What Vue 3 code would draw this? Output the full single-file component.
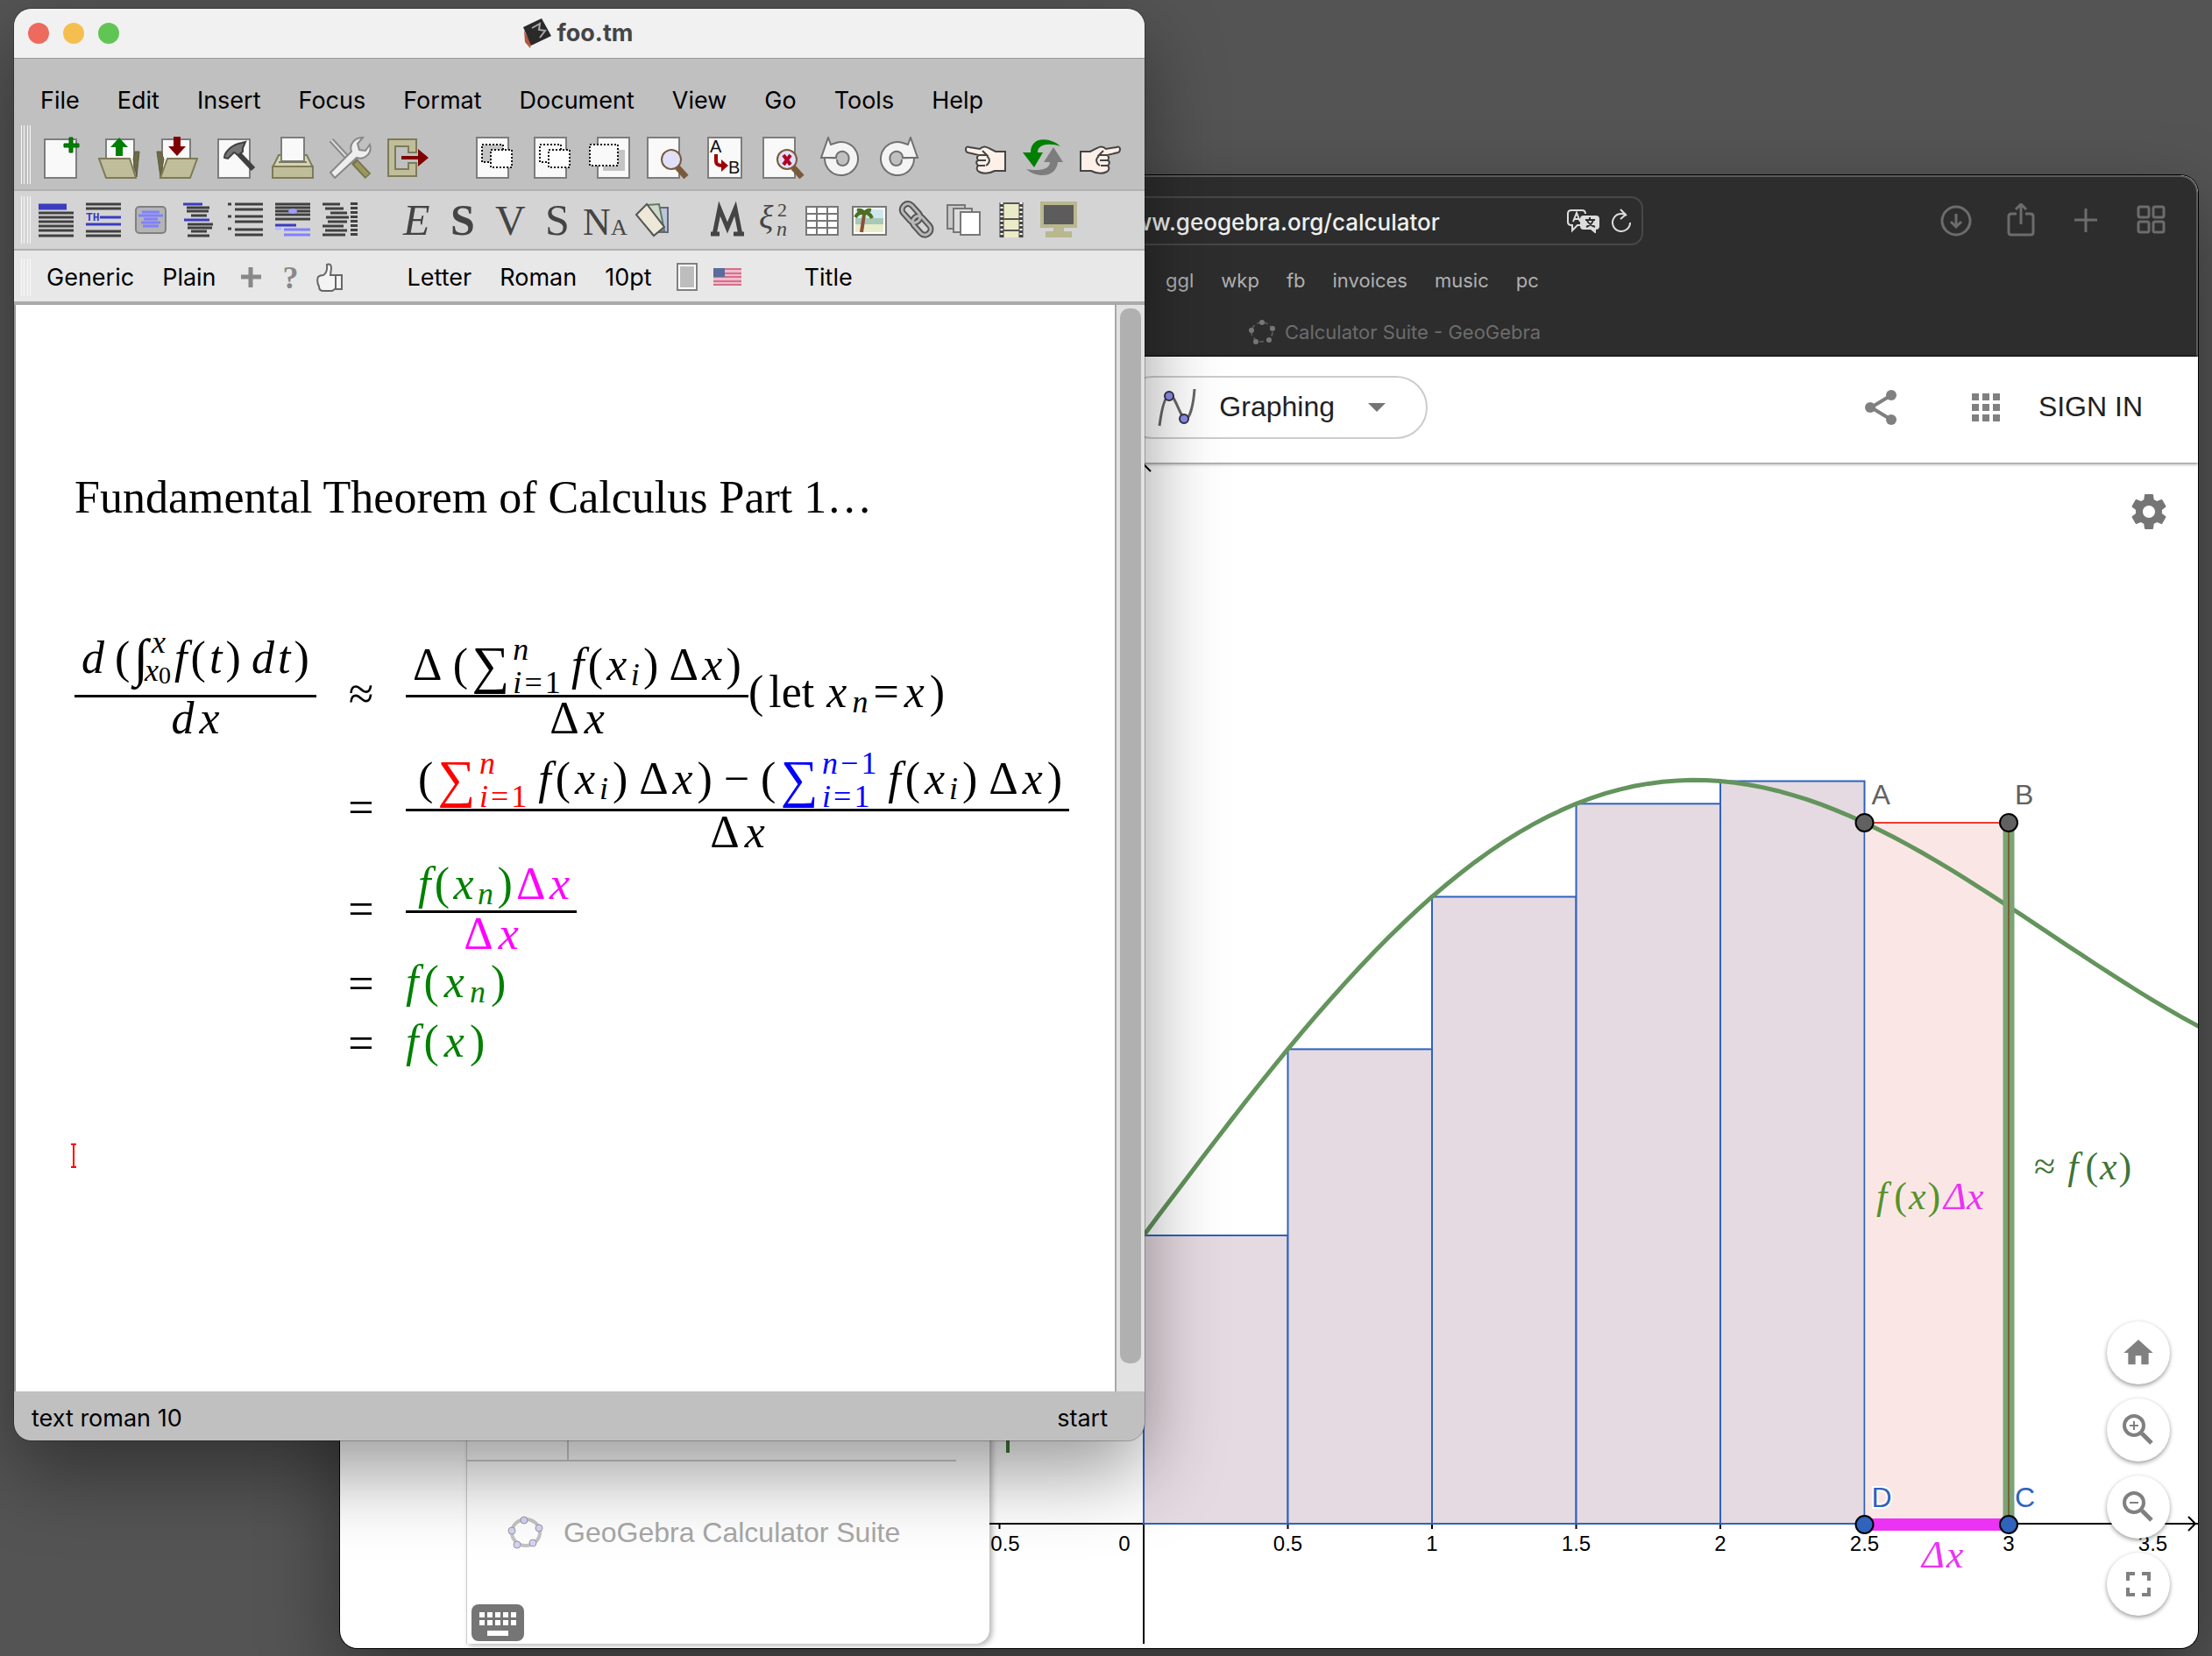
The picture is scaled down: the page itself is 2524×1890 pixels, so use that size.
<script setup>
const page = (x, w, y = 1, h = 46) =>
  `<rect x="${x}" y="${y}" width="${w}" height="${h}" fill="#f9f9f9" stroke="#7d7d7d" stroke-width="2"/>`
const rows = (list, color = '#404040', weight = 3) =>
  list.map(([x1, x2, y, c]) => `<path d="M${x1} ${y}H${x2}" stroke="${c || color}" stroke-width="${weight}"/>`).join('')

const blue = '#3c3cc0'
const sky = '#8080ff'

const lens = (x, extra = '') =>
  page(x, 36) +
  `<path d="M35 35l10 11" stroke="#7a5a3c" stroke-width="7"/><circle cx="28" cy="26" r="11" fill="#e0e0fa" stroke="#7a5a3c" stroke-width="2"/>` +
  extra

const spiral =
  '<path d="M5 25A19 19 0 1 0 18 7L12 9 9 1 1 24h17c0-6 6-9 11-6 6 4 4 14-3 15-5 0-7-3-7-7" fill="#f4f4f4" stroke="#707070" stroke-width="2"/>'
const hand =
  '<path d="M2 14c0-2 2-3 4-2l12 2c3-3 7-3 10-1l8 4h11v22H35c-6 3-12 4-18 1-3-2-3-5-1-7-3-3-2-5 0-6-2-3-1-5 1-6L4 18c-1 0-2-2-2-4z" fill="#fdf0e8" stroke="#444" stroke-width="2"/><path d="M17 21h9l-5-5M16 27h9M16 33h8M26 22c4 3 4 8-1 11" fill="none" stroke="#444" stroke-width="2"/>'

const mainTools = [
  [
    { label: 'New', art: page(5, 36, 3, 44) + '<path d="M33 1h4v7h7v4h-7v6h-4v-6h-6V8h6z" fill="#008000" stroke="#006000"/>' },
    {
      label: 'Open',
      art: page(9, 32, 3, 40) + '<path d="M42 17l5 0-3 29-4-20z" fill="#6d6a48" stroke="#5d5a3c"/><path d="M1 25h35l7 22H9z" fill="#c0be9a" stroke="#7d7b58" stroke-width="2"/><path d="M24 1l10 11h-6v10h-8V12h-6z" fill="#008000"/>'
    },
    {
      label: 'Save',
      art: page(7, 32, 3, 40) + '<path d="M1 17h5l3 9-4 20z" fill="#6d6a48" stroke="#5d5a3c"/><path d="M13 25h34l-8 22H5z" fill="#c0be9a" stroke="#7d7b58" stroke-width="2"/><path d="M24 22l10-11h-6V0h-8v11h-6z" fill="#800000"/>'
    },
    {
      label: 'Build',
      art: page(5, 36, 3, 44) + '<path d="M26 17l19 20" stroke="#404040" stroke-width="6"/><path d="M12 24c0-6 8-15 20-17l4-1-3 7 0 4-5 4-5-3-7 7z" fill="#757575" stroke="#404040" stroke-width="2"/>'
    },
    {
      label: 'Print',
      art: '<path d="M8 21h32l7 14H1z" fill="#d6d4b4" stroke="#7d7b58" stroke-width="2"/><rect x="11" y="1" width="26" height="27" fill="#f9f9f9" stroke="#7d7d7d" stroke-width="2"/><path d="M8 29h32" stroke="#7d7b58" stroke-width="2"/><rect x="1" y="34" width="46" height="13" fill="#c0be9a" stroke="#7d7b58" stroke-width="2"/>'
    },
    {
      label: 'Preferences',
      art: '<path d="M2 4l23 25" stroke="#888" stroke-width="6"/><path d="M2 4l23 25" stroke="#ddd" stroke-width="2"/><path d="M28 28l16 17" stroke="#77754a" stroke-width="9"/><path d="M30 30l13 14" stroke="#9a985f" stroke-width="5"/><path d="M1 41L25 17C22 8 29 1 38 1l-6 7 2 7 7 1 5-7c3 10-6 18-15 15L6 47z" fill="#eee" stroke="#888" stroke-width="2"/>'
    },
    {
      label: 'Exit',
      art: '<path d="M1 3h32v15h-9v-7H9v26h15v-7h9v15H1z" fill="#c0be9a" stroke="#7d7b58" stroke-width="2"/><path d="M16 22h19v-8l12 10-12 10v-8H16z" fill="#800000"/>'
    }
  ],
  [
    {
      label: 'Copy',
      art: page(4, 36) + '<rect x="10" y="9" width="24" height="20" fill="#c4c4c4" stroke="#111" stroke-width="2" stroke-dasharray="2 2"/><rect x="20" y="15" width="24" height="20" fill="#fff" stroke="#111" stroke-width="2" stroke-dasharray="2 2"/>'
    },
    {
      label: 'Cut',
      art: page(4, 36) + '<rect x="10" y="9" width="24" height="20" fill="#f9f9f9" stroke="#111" stroke-width="2" stroke-dasharray="2 2"/><rect x="20" y="15" width="24" height="20" fill="#fff" stroke="#111" stroke-width="2" stroke-dasharray="2 2"/>'
    },
    {
      label: 'Paste',
      art: page(10, 36) + '<path d="M16 15h25v24H16z" fill="#c4c4c4"/><rect x="1" y="9" width="32" height="24" fill="#f9f9f9" stroke="#111" stroke-width="2" stroke-dasharray="2 2"/>'
    },
    { label: 'Find', art: lens(1) },
    {
      label: 'Replace',
      art: page(4, 38) + '<text x="6" y="18" font-size="20" fill="#111">A</text><text x="27" y="42" font-size="20" fill="#111">B</text><path d="M13 20v8q0 5 7 5" fill="none" stroke="#a00000" stroke-width="4"/><path d="M19 26l8 7-8 7z" fill="#a00000"/>'
    },
    { label: 'Spell check', art: lens(1, '<path d="M24 21l8 11M32 21l-8 11" stroke="#b00020" stroke-width="4"/>') },
    { label: 'Undo', art: spiral },
    { label: 'Redo', art: `<g transform="translate(46 0) scale(-1 1)">${spiral}</g>` }
  ],
  [
    { label: 'Back', art: hand },
    {
      label: 'Reload',
      art: '<path d="M44 11C34 1 10-2 10 18H1l13 17 10-17h-6C18 8 32 7 44 11z" fill="#008000"/><path d="M5 37c11 10 34 11 36-8h6L36 12 25 29h7c0 10-16 10-27 8z" fill="#7d7d7d"/>'
    },
    { label: 'Forward', art: `<g transform="translate(48 0) scale(-1 1)">${hand}</g>` }
  ]
]

const glyph = (t, x, y, size, extra = '') => `<text x="${x}" y="${y}" font-size="${size}" fill="#444" ${extra}>${t}</text>`

const modeTools = [
  [
    {
      label: 'Section',
      art: `<path d="M0 5h32" stroke="${blue}" stroke-width="7"/>` + rows([12, 17, 22, 27, 32, 38].map((y) => [0, 40, y]))
    },
    {
      label: 'Theorem',
      art: rows([[0, 40, 2], [0, 40, 7], [16, 40, 17, blue], [0, 40, 25, blue], [0, 40, 33], [0, 40, 38]]) +
        `<text x="0" y="21" font-size="13" font-weight="700" fill="${blue}" font-family="Liberation Mono">TH</text>`
    },
    {
      label: 'Box',
      art: '<rect x="3" y="5" width="34" height="30" rx="4" fill="#b4b4b4" stroke="#808080" stroke-width="2"/>' +
        rows([[10, 30, 11], [6, 34, 15], [12, 28, 19], [9, 31, 23], [11, 29, 27]], sky)
    },
    {
      label: 'Verse',
      art: rows([[3, 25, 2, blue], [7, 33, 6], [7, 32, 10], [12, 30, 15], [4, 33, 20, blue], [8, 37, 25], [8, 36, 29], [12, 30, 33], [8, 33, 38]])
    },
    {
      label: 'List',
      art: rows([[0, 4, 2], [8, 40, 2], [8, 40, 8], [0, 4, 16], [8, 40, 16], [8, 40, 22], [0, 4, 30], [8, 40, 31], [8, 40, 37]])
    },
    {
      label: 'Figure',
      art: rows([[0, 40, 2], [0, 40, 6], [0, 40, 10], [0, 40, 14], [0, 40, 19], [0, 24, 26, blue], [0, 7, 30, '#b8b8ff'], [10, 40, 31, sky], [10, 40, 37, sky]]) +
        '<ellipse cx="20" cy="10" rx="5" ry="3" fill="#9c9cff"/>'
    },
    {
      label: 'Marginal',
      art: rows([[0, 20, 2], [3, 24, 7], [9, 28, 12], [4, 30, 17], [6, 28, 22], [0, 24, 27], [3, 28, 32], [0, 26, 37]]) +
        '<path d="M36 0v39" stroke="#404040" stroke-width="8" stroke-dasharray="3 2"/>'
    }
  ],
  [
    { label: 'Emphasis', art: glyph('E', 6, 37, 50, 'font-style="italic"') },
    { label: 'Strong', art: glyph('S', 6, 37, 50, 'font-weight="700"') },
    { label: 'Verbatim', art: glyph('V', 3, 37, 48) },
    { label: 'Sample', art: glyph('S', 6, 37, 50) },
    { label: 'Name', art: glyph('N', -5, 37, 44) + glyph('A', 27, 37, 26) },
    {
      label: 'Cards',
      art: '<path d="M24 6h14v28H20z" fill="#b8c8dc" stroke="#667" stroke-width="2"/><path d="M14 3l14-1 6 30-14 4z" fill="#ccd8c8" stroke="#676" stroke-width="2"/><path d="M2 14L14 2l20 26-12 10z" fill="#eee8d8" stroke="#555" stroke-width="2"/>'
    }
  ],
  [
    { label: 'Math', art: '<path d="M5 37L11 7l9 22 9-22 6 30M1 36h10M27 36h12" fill="none" stroke="#444" stroke-width="5"/>' },
    { label: 'Symbols', art: glyph('ξ', 2, 30, 38, 'font-style="italic"') + glyph('2', 23, 16, 22) + glyph('n', 22, 38, 24, 'font-style="italic"') },
    {
      label: 'Table',
      art: '<rect x="2" y="5" width="36" height="32" fill="#fff"/><path d="M2 5h36v32H2zM2 13h36M2 21h36M2 29h36M14 5v32M26 5v32" fill="none" stroke="#777" stroke-width="2"/>'
    },
    {
      label: 'Image',
      art: '<rect x="1" y="5" width="38" height="32" fill="#fff" stroke="#777" stroke-width="2"/><path d="M4 8h32v10H4z" fill="#cfe8f0"/><path d="M4 18h32v7H4z" fill="#a8c8b8"/><path d="M4 25h32v9H4z" fill="#e8ecc8"/><path d="M11 34l3-20" stroke="#8a5038" stroke-width="4"/><path d="M4 17q3-6 10-5 6-1 9 6M6 9q6-1 8 4 3-5 8-4" fill="none" stroke="#4d7020" stroke-width="4"/>'
    },
    {
      label: 'Link',
      art: '<g fill="none" stroke="#555" stroke-width="7"><rect x="2" y="6" width="24" height="13" rx="6" transform="rotate(48 14 12)"/><rect x="14" y="20" width="24" height="13" rx="6" transform="rotate(48 26 26)"/></g><g fill="none" stroke="#b8b8b8" stroke-width="3"><rect x="2" y="6" width="24" height="13" rx="6" transform="rotate(48 14 12)"/><rect x="14" y="20" width="24" height="13" rx="6" transform="rotate(48 26 26)"/></g>'
    },
    {
      label: 'Pages',
      art: '<g stroke="#777" stroke-width="2"><path d="M1 3h20v27H1z" fill="#c8c8c8"/><path d="M8 7h21v27H8z" fill="#ddd"/><path d="M16 11h22v26H16z" fill="#fff"/></g>'
    },
    {
      label: 'Video',
      art: '<rect x="7" y="0" width="26" height="40" fill="#ecebc8"/><path d="M9 0v40M31 0v40" stroke="#444" stroke-width="5"/><path d="M9 0v40M31 0v40" stroke="#fff" stroke-width="3" stroke-dasharray="2 3"/><path d="M11 1h18M11 19h18M11 32h18" stroke="#555" stroke-width="2"/>'
    },
    {
      label: 'Presentation',
      art: '<rect x="1" y="1" width="38" height="26" fill="#5c5c5c" stroke="#b9b78e" stroke-width="4"/><path d="M14 29h12v4h9v7H5v-7h9z" fill="#b9b78e"/>'
    }
  ]
]

const menus = ['File', 'Edit', 'Insert', 'Focus', 'Format', 'Document', 'View', 'Go', 'Tools', 'Help']
const bookmarks = ['ggl', 'wkp', 'fb', 'invoices', 'music', 'pc']

// Graph of f(x) = sin x + 1 + x/3 with left Riemann rectangles
const unit = 329
const origin = { x: 176, y: 1211 }
const f = (x) => Math.sin(x) + 1 + x / 3
const px = (x) => origin.x + unit * x
const py = (y) => origin.y - unit * y
const bars = [0, 0.5, 1, 1.5, 2].map((x) => ({ x: px(x), y: py(f(x)), h: unit * f(x) }))
const curve = Array.from({ length: 90 }, (_, i) => i * 0.05)
  .map((x, i) => `${i ? 'L' : 'M'}${px(x).toFixed(1)} ${py(f(x)).toFixed(1)}`)
  .join('')
const ticks = [-0.5, 0.5, 1, 1.5, 2, 2.5, 3, 3.5]
const topY = py(f(2.5))
</script>

<template>
  <main class="desktop">
    <section class="browser" aria-label="Web browser">
      <header class="chrome">
        <div class="address-row">
          <div class="address">
            <input type="text" value="www.geogebra.org/calculator" aria-label="Address" />
            <span class="address-icons">
              <svg width="40" height="28" viewBox="0 0 40 28">
                <path d="M18 19h-5l-6 6v-6H6q-4 0-4-4V6q0-4 4-4h12q4 0 4 4" fill="none" stroke="#ddd" stroke-width="2" />
                <path d="M20 8h14q4 0 4 4v8q0 4-4 4v5l-6-5h-8q-4 0-4-4v-8q0-4 4-4z" fill="#ddd" />
                <path d="M8 15l4-10 4 10M9 12h6" fill="none" stroke="#ddd" stroke-width="2" />
                <path d="M22 13h11M27 10v3M31 13q-2 6-8 8M24 14q3 5 9 7" fill="none" stroke="#2d2d2d" stroke-width="2" />
              </svg>
              <svg width="26" height="28" viewBox="0 0 26 28">
                <path d="M19 8A10 10 0 1 0 23 16M12 1l6 6-6 5" fill="none" stroke="#ddd" stroke-width="2" />
              </svg>
            </span>
          </div>
          <nav class="chrome-tools">
            <button aria-label="Downloads">
              <svg width="40" height="40" viewBox="0 0 40 40"><circle cx="20" cy="20" r="16" /><path d="M20 12v15M14 21l6 6 6-6" /></svg>
            </button>
            <button aria-label="Share">
              <svg width="40" height="40" viewBox="0 0 40 40"><path d="M15 12H9q-3 0-3 3v18q0 3 3 3h22q3 0 3-3V15q0-3-3-3h-6M20 24V2M14 7l6-6 6 6" /></svg>
            </button>
            <button aria-label="New tab">
              <svg width="40" height="40" viewBox="0 0 40 40"><path d="M20 6v27M7 19h26" /></svg>
            </button>
            <button aria-label="Tab overview">
              <svg width="40" height="40" viewBox="0 0 40 40">
                <rect x="6" y="4" width="12" height="12" rx="2" /><rect x="23" y="4" width="12" height="12" rx="2" />
                <rect x="6" y="21" width="12" height="12" rx="2" /><rect x="23" y="21" width="12" height="12" rx="2" />
              </svg>
            </button>
          </nav>
        </div>
        <nav class="bookmarks">
          <a v-for="b in bookmarks" :key="b" href="#">{{ b }}</a>
        </nav>
        <div class="tab">
          <svg width="32" height="28" viewBox="0 0 32 28">
            <ellipse cx="16" cy="14" rx="12" ry="11" fill="none" stroke="#555" stroke-width="2" stroke-dasharray="5 3" />
            <g fill="#777"><circle cx="16" cy="3" r="3" /><circle cx="28" cy="10" r="3" /><circle cx="24" cy="23" r="3" /><circle cx="9" cy="25" r="3" /><circle cx="4" cy="12" r="3" /></g>
          </svg>
          <span>Calculator Suite - GeoGebra</span>
        </div>
      </header>

      <header class="app-bar">
        <button class="mode">
          <svg width="44" height="44" viewBox="0 0 44 44">
            <path d="M2 43C5 20 9 8 14 8c6 0 12 27 18 27 5 0 9-18 10-34" fill="none" stroke="#666" stroke-width="3" />
            <g fill="#8d8df0" stroke="#334" stroke-width="2"><circle cx="13" cy="9" r="5" /><circle cx="30" cy="35" r="5" /></g>
          </svg>
          <span>Graphing</span>
          <svg width="20" height="10" viewBox="0 0 20 10"><path d="M0 0h20L10 10z" fill="#757575" /></svg>
        </button>
        <div class="app-actions">
          <button aria-label="Share">
            <svg width="40" height="40" viewBox="0 0 40 40">
              <path d="M32 6L9 20l23 14" fill="none" stroke="#808080" stroke-width="4" />
              <g fill="#808080"><circle cx="32" cy="6" r="6" /><circle cx="8" cy="20" r="6" /><circle cx="32" cy="34" r="6" /></g>
            </svg>
          </button>
          <button aria-label="Apps">
            <svg width="32" height="32" viewBox="0 0 32 32"><path d="M4 0v32M16 0v32M28 0v32" stroke="#808080" stroke-width="8" stroke-dasharray="8 4" /></svg>
          </button>
          <a href="#">SIGN IN</a>
        </div>
      </header>

      <div class="workspace">
        <aside class="rail"></aside>
        <section class="algebra">
          <div class="algebra-row"><span></span></div>
          <div class="brand">
            <svg width="42" height="38" viewBox="0 0 42 38">
              <ellipse cx="21" cy="19" rx="16" ry="15" fill="none" stroke="#c4c4c4" stroke-width="4" />
              <g fill="#d4d4fa" stroke="#999"><circle cx="19" cy="5" r="4" /><circle cx="36" cy="14" r="4" /><circle cx="29" cy="31" r="4" /><circle cx="11" cy="33" r="4" /><circle cx="5" cy="17" r="4" /></g>
            </svg>
            <span>GeoGebra Calculator Suite</span>
          </div>
          <button class="keyboard" aria-label="Keyboard">
            <svg width="60" height="42" viewBox="0 0 60 42">
              <path d="M9 12h43M9 21h43" stroke="#fff" stroke-width="6" stroke-dasharray="6 3" />
              <path d="M18 33h24" stroke="#fff" stroke-width="6" />
            </svg>
          </button>
        </section>

        <section class="graph">
          <svg class="plot" role="img" aria-label="Riemann sum under a curve">
            <g stroke="#000" stroke-width="2" fill="none">
              <path :d="`M0 ${origin.y}H5000`" />
              <path :d="`M${origin.x} 0V1348`" />
              <path :d="`M${origin.x - 8} 10l8-8 8 8M1368 ${origin.y - 8}l8 8-8 8`" />
              <path v-for="t in ticks" :key="t" :d="`M${px(t)} ${origin.y}v6`" />
            </g>
            <rect v-for="b in bars" :key="b.x" :x="b.x" :y="b.y" :width="unit / 2" :height="b.h" fill="#e5dae1" stroke="#2f62bd" stroke-width="2" />
            <rect :x="px(2.5) + 1" :y="topY" :width="unit / 2" :height="origin.y - topY" fill="#fae7e5" />
            <path :d="`M${px(2.5)} ${topY}H${px(3)}`" stroke="#f03a2e" stroke-width="2" />
            <path d="M21 1080v50" stroke="#3f7538" stroke-width="4" />
            <path :d="curve" fill="none" stroke="#63945c" stroke-width="5" />
            <path :d="`M${px(3)} ${topY}V${origin.y}`" stroke="#7ba377" stroke-width="13" />
            <path :d="`M${px(3)} ${topY}V${origin.y}`" stroke="#79602f" stroke-width="2" />
            <path :d="`M${px(2.5)} ${origin.y + 1}H${px(3)}`" stroke="#ec32f5" stroke-width="14" />
            <g stroke="#000" stroke-width="2">
              <circle :cx="px(2.5)" :cy="topY" r="10" fill="#616161" /><circle :cx="px(3)" :cy="topY" r="10" fill="#616161" />
              <circle :cx="px(2.5)" :cy="origin.y + 1" r="10" fill="#2f63bc" /><circle :cx="px(3)" :cy="origin.y + 1" r="10" fill="#2f63bc" />
            </g>
            <g class="axis-text">
              <text x="18" :y="origin.y + 31">0.5</text>
              <text v-for="t in ticks.slice(1)" :key="t" :x="px(t)" :y="origin.y + 31">{{ t }}</text>
              <text :x="origin.x - 22" :y="origin.y + 31">0</text>
            </g>
            <g class="point-text">
              <text :x="px(2.5) + 8" :y="topY - 21" fill="#616161">A</text>
              <text :x="px(3) + 7" :y="topY - 21" fill="#616161">B</text>
              <text :x="px(2.5) + 8" :y="origin.y - 19" fill="#2f63bc">D</text>
              <text :x="px(3) + 7" :y="origin.y - 19" fill="#2f63bc">C</text>
            </g>
            <g class="math-text">
              <text x="1012" y="852" fill="#56932b">f<tspan class="up" dx="8">(</tspan><tspan dx="2">x</tspan><tspan class="up" dx="2">)</tspan><tspan dx="4" fill="#ec32f5">Δx</tspan></text>
              <text x="1192" y="818" fill="#3f7538"><tspan class="up">≈</tspan><tspan dx="14">f</tspan><tspan class="up" dx="8">(</tspan><tspan dx="2">x</tspan><tspan class="up" dx="2">)</tspan></text>
              <text x="1064" y="1261" fill="#ec32f5">Δ<tspan dx="2">x</tspan></text>
            </g>
          </svg>
          <button class="settings" aria-label="Settings">
            <svg width="48" height="48" viewBox="0 0 24 24">
              <path fill="#757575" d="M19.43 12.98c.04-.32.07-.64.07-.98s-.03-.66-.07-.98l2.11-1.65c.19-.15.24-.42.12-.64l-2-3.46c-.12-.22-.39-.3-.61-.22l-2.49 1c-.52-.4-1.08-.73-1.69-.98l-.38-2.65C14.46 2.18 14.25 2 14 2h-4c-.25 0-.46.18-.49.42l-.38 2.65c-.61.25-1.17.59-1.69.98l-2.49-1c-.23-.09-.49 0-.61.22l-2 3.46c-.13.22-.07.49.12.64l2.11 1.65c-.04.32-.07.65-.07.98s.03.66.07.98l-2.11 1.65c-.19.15-.24.42-.12.64l2 3.46c.12.22.39.3.61.22l2.49-1c.52.4 1.08.73 1.69.98l.38 2.65c.03.24.24.42.49.42h4c.25 0 .46-.18.49-.42l.38-2.65c.61-.25 1.17-.59 1.69-.98l2.49 1c.23.09.49 0 .61-.22l2-3.46c.12-.22.07-.49-.12-.64l-2.11-1.65zM12 15.5c-1.93 0-3.500-1.570-3.500-3.500s1.570-3.500 3.500-3.500 3.500 1.570 3.500 3.500-1.570 3.500-3.500 3.500z" />
            </svg>
          </button>
          <div class="zoom-stack">
            <button aria-label="Standard view"><svg width="40" height="40" viewBox="0 0 24 24"><path fill="#808080" d="M10 20v-6h4v6h5v-8h3L12 3 2 12h3v8z" /></svg></button>
            <button aria-label="Zoom in">
              <svg width="40" height="40" viewBox="0 0 40 40" fill="none" stroke="#808080"><circle cx="15" cy="15" r="11" stroke-width="4" /><path d="M24 24l11 11" stroke-width="5" /><path d="M10 15h10M15 10v10" stroke-width="2" /></svg>
            </button>
            <button aria-label="Zoom out">
              <svg width="40" height="40" viewBox="0 0 40 40" fill="none" stroke="#808080"><circle cx="15" cy="15" r="11" stroke-width="4" /><path d="M24 24l11 11" stroke-width="5" /><path d="M10 15h10" stroke-width="2" /></svg>
            </button>
            <button aria-label="Full screen"><svg width="40" height="40" viewBox="0 0 40 40"><path d="M8 16V8h8M24 8h8v8M32 24v8h-8M16 32H8v-8" fill="none" stroke="#808080" stroke-width="4" /></svg></button>
          </div>
        </section>
      </div>
    </section>

    <section class="editor" aria-label="Document editor">
      <header class="title-bar">
        <div class="lights">
          <button class="close" aria-label="Close"></button>
          <button class="minimize" aria-label="Minimize"></button>
          <button class="expand" aria-label="Zoom"></button>
        </div>
        <h1>
          <svg width="34" height="34" viewBox="0 0 34 34">
            <path d="M2 14l1 13 6 7 1-5z" fill="#b5553c" />
            <path d="M1 10L22 0l11 20-23 11z" fill="#2a2a2a" />
            <path d="M11 11l9-5-1 7 7 1-6 8" fill="none" stroke="#aaa" stroke-width="2" />
          </svg>
          <span>foo.tm</span>
        </h1>
      </header>

      <nav class="menu-bar">
        <button v-for="m in menus" :key="m">{{ m }}</button>
      </nav>

      <div class="tools main-tools">
        <i class="grip"></i>
        <div v-for="(group, g) in mainTools" :key="g" class="group">
          <button v-for="t in group" :key="t.label" :aria-label="t.label">
            <svg width="48" height="48" viewBox="0 0 48 48" v-html="t.art"></svg>
          </button>
        </div>
      </div>

      <div class="tools mode-tools">
        <i class="grip"></i>
        <div v-for="(group, g) in modeTools" :key="g" class="group">
          <button v-for="t in group" :key="t.label" :aria-label="t.label">
            <svg width="40" height="40" viewBox="0 0 40 40" v-html="t.art"></svg>
          </button>
        </div>
      </div>

      <div class="tools focus-tools">
        <i class="grip"></i>
        <div class="group">
          <button>Generic</button>
          <button>Plain</button>
          <span class="small-icons">
            <button aria-label="Add"><svg width="32" height="34" viewBox="0 0 32 34"><path d="M15 5v23M4 16h23" stroke="#888" stroke-width="5" /></svg></button>
            <button class="help" aria-label="Help">?</button>
            <button aria-label="Like">
              <svg width="32" height="34" viewBox="0 0 32 34"><path d="M2 16q2-2 6-2 5-3 4-12 5-2 5 4l-1 8h13v16h-8l-3 2H8q-5 0-5-5-3-6-1-11zM22 15v14" fill="#f4f4f4" stroke="#666" stroke-width="2" /></svg>
            </button>
          </span>
        </div>
        <div class="group">
          <button>Letter</button>
          <button>Roman</button>
          <button>10pt</button>
          <span class="small-icons tight">
            <button aria-label="Page"><svg width="24" height="34" viewBox="0 0 24 34"><rect x="1" y="1" width="22" height="30" fill="#fff" stroke="#808080" stroke-width="2" /><rect x="4" y="4" width="16" height="24" fill="#bdbdbd" /></svg></button>
            <button aria-label="Language">
              <svg width="32" height="34" viewBox="0 0 32 34"><rect y="6" width="32" height="20" fill="#f0bccb" /><path d="M0 7h32M0 12h32M0 16h32M0 21h32M0 25h32" stroke="#d4708c" stroke-width="2" /><rect y="6" width="13" height="10" fill="#5a6c9c" /></svg>
            </button>
          </span>
        </div>
        <div class="group"><button>Title</button></div>
      </div>

      <div class="doc-area">
        <article class="doc">
          <p class="heading">Fundamental Theorem of Calculus Part 1…</p>

          <div class="equations">
            <div class="frac f1">
              <div class="num high">
                <i>d</i><b class="thin">(</b><span class="big">∫</span><span class="limits int"><i>x</i><span><i>x</i><small>0</small></span></span><i>f</i><b>(</b><i>t</i><b>)</b><i class="thin">d</i><i>t</i><b>)</b>
              </div>
              <div class="den"><i>d</i><i>x</i></div>
            </div>
            <span class="rel">≈</span>
            <div class="rhs">
              <div class="frac f2">
                <div class="num">
                  <b>Δ</b><b class="thin">(</b><span class="big">∑</span><span class="limits"><i>n</i><span><i>i</i><b>=</b><b>1</b></span></span><i class="thin">f</i><b>(</b><i>x</i><i class="sub">i</i><b>)</b><b class="thin">Δ</b><i>x</i><b>)</b>
                </div>
                <div class="den"><b>Δ</b><i>x</i></div>
              </div>
              <span class="inline"><b>(</b><b>let</b><i class="thin">x</i><i class="sub">n</i><b>=</b><i>x</i><b>)</b></span>
            </div>

            <span></span>
            <span class="rel">=</span>
            <div class="rhs">
              <div class="frac f3">
                <div class="num">
                  <b>(</b><span class="big red">∑</span><span class="limits red"><i>n</i><span><i>i</i><b>=</b><b>1</b></span></span><i class="thin">f</i><b>(</b><i>x</i><i class="sub">i</i><b>)</b><b class="thin">Δ</b><i>x</i><b>)</b><b class="thin">−</b><b class="thin">(</b><span class="big blue">∑</span><span class="limits blue"><span><i>n</i><b>−</b><b>1</b></span><span><i>i</i><b>=</b><b>1</b></span></span><i class="thin">f</i><b>(</b><i>x</i><i class="sub">i</i><b>)</b><b class="thin">Δ</b><i>x</i><b>)</b>
                </div>
                <div class="den"><b>Δ</b><i>x</i></div>
              </div>
            </div>

            <span></span>
            <span class="rel">=</span>
            <div class="rhs">
              <div class="frac f4">
                <div class="num green"><i>f</i><b>(</b><i>x</i><i class="sub">n</i><b>)</b><b class="pink">Δ</b><i class="pink">x</i></div>
                <div class="den pink"><b>Δ</b><i>x</i></div>
              </div>
            </div>

            <span></span>
            <span class="rel">=</span>
            <div class="rhs"><span class="inline green"><i>f</i><b>(</b><i>x</i><i class="sub">n</i><b>)</b></span></div>

            <span></span>
            <span class="rel">=</span>
            <div class="rhs"><span class="inline green"><i>f</i><b>(</b><i>x</i><b>)</b></span></div>
          </div>

          <svg class="caret" width="8" height="28" viewBox="0 0 8 28"><path d="M1 1h6M4 1v26M1 27h6" stroke="#f00" stroke-width="2" fill="none" /></svg>
        </article>
        <div class="scroll"><div class="thumb"></div></div>
      </div>

      <footer class="status"><span>text roman 10</span><span>start</span></footer>
    </section>
  </main>
</template>

<style>
body {
  margin: 0;
}
</style>

<style scoped>
* {
  box-sizing: border-box;
}
button {
  border: 0;
  padding: 0;
  margin: 0;
  background: none;
  font: inherit;
  color: inherit;
  display: flex;
  align-items: center;
  justify-content: center;
}
a {
  color: inherit;
  text-decoration: none;
}
svg {
  display: block;
  flex: none;
}
.desktop {
  position: relative;
  min-height: 100vh;
  overflow: hidden;
  background: #545454;
  font-family: Inter, 'Liberation Sans', sans-serif;
}

/* Browser window */
.browser {
  position: absolute;
  z-index: 1;
  top: 200px;
  left: 388px;
  right: 16px;
  bottom: 9px;
  display: flex;
  flex-direction: column;
  border-radius: 20px;
  overflow: hidden;
  background: #fff;
  box-shadow: 0 0 0 1px #000, 0 36px 90px rgba(0, 0, 0, 0.4);
}
.chrome {
  height: 207px;
  background: #2d2d2d;
  border: 2px solid #5c5c5c;
  border-width: 2px 2px 0 0;
  border-radius: 0 20px 0 0;
  border-bottom: 1px solid #000;
}
.address-row {
  display: grid;
  grid-template-columns: 1fr 855px 1fr;
  align-items: center;
  padding-top: 22px;
}
.address {
  grid-column: 2;
  position: relative;
  height: 56px;
  border: 2px solid #484848;
  border-radius: 14px;
}
.address input {
  width: 100%;
  height: 100%;
  border: 0;
  padding: 2px 0 0 20px;
  background: none;
  outline: none;
  text-align: center;
  color: #f0f0f0;
  font: 500 26px Inter, sans-serif;
}
.address-icons {
  position: absolute;
  right: 10px;
  top: 12px;
  display: flex;
  gap: 10px;
}
.chrome-tools {
  display: flex;
  justify-content: flex-end;
  gap: 34px;
  padding-right: 32px;
}
.chrome-tools svg {
  fill: none;
  stroke: #6c6c6c;
  stroke-width: 3;
}
.bookmarks {
  display: flex;
  gap: 31px;
  padding-left: 942px;
  margin-top: 26px;
  line-height: 28px;
  font-size: 22px;
  color: #b0b0b0;
}
.tab {
  display: flex;
  align-items: center;
  gap: 10px;
  margin-top: 31px;
  padding-left: 1036px;
  font-size: 22px;
  line-height: 28px;
  color: #6c6c6c;
}
.app-bar {
  position: relative;
  z-index: 1;
  height: 121px;
  flex: none;
  display: flex;
  align-items: center;
  justify-content: space-between;
  padding: 0 63px 6px 891px;
  background: #fff;
  box-shadow: 0 1px 4px rgba(0, 0, 0, 0.6);
  font-family: 'Liberation Sans', Arial, sans-serif;
  font-size: 32px;
  color: #222;
}
.mode {
  width: 350px;
  height: 72px;
  gap: 26px;
  justify-content: flex-end;
  padding-right: 46px;
  border: 2px solid #ccc;
  border-radius: 36px;
}
.mode span {
  margin-right: 12px;
}
.app-actions {
  display: flex;
  align-items: center;
}
.app-actions button {
  margin-right: 84px;
}
.app-actions button + button {
  margin-right: 44px;
}
.workspace {
  flex: 1;
  min-height: 0;
  display: flex;
  font-family: 'Liberation Sans', Arial, sans-serif;
}
.rail {
  width: 144px;
}
.algebra {
  position: relative;
  z-index: 1;
  width: 597px;
  margin-bottom: 5px;
  display: flex;
  flex-direction: column;
  justify-content: flex-end;
  border-left: 1px solid #ccc;
  border-radius: 0 0 16px 0;
  background: #fff;
  box-shadow: 3px 2px 6px rgba(0, 0, 0, 0.3);
}
.algebra-row {
  height: 100px;
  width: 558px;
  border-bottom: 2px solid #ccc;
}
.algebra-row span {
  display: block;
  width: 116px;
  height: 100%;
  border-right: 2px solid #ccc;
}
.brand {
  display: flex;
  align-items: center;
  gap: 22px;
  padding: 61px 0 1px 46px;
  font-size: 32px;
  line-height: 40px;
  color: #a8a8a8;
}
.keyboard {
  width: 60px;
  height: 42px;
  margin: 61px 0 3px 5px;
  border-radius: 8px;
  background: #757575;
}
.graph {
  position: relative;
  flex: 1;
}
.plot {
  width: 100%;
  height: 100%;
}
.axis-text {
  font-size: 24px;
  text-anchor: middle;
}
.point-text {
  font-size: 32px;
  stroke: #fff;
  stroke-width: 4px;
  paint-order: stroke;
}
.math-text {
  font-family: 'Liberation Serif', serif;
  font-style: italic;
  font-size: 44px;
}
.math-text .up {
  font-style: normal;
}
.settings {
  position: absolute;
  top: 32px;
  right: 32px;
}
.zoom-stack {
  position: absolute;
  right: 32px;
  bottom: 37px;
  display: flex;
  flex-direction: column;
  gap: 16px;
}
.zoom-stack button {
  width: 72px;
  height: 72px;
  border-radius: 50%;
  background: #fff;
  box-shadow: 0 2px 5px rgba(0, 0, 0, 0.4);
}

/* Editor window */
.editor {
  position: relative;
  z-index: 2;
  width: 1290px;
  left: 16px;
  top: 10px;
  display: flex;
  flex-direction: column;
  border-radius: 20px;
  overflow: hidden;
  background: #c0c0c0;
  box-shadow: 0 0 0 1px rgba(0, 0, 0, 0.25), 0 36px 90px rgba(0, 0, 0, 0.4);
  font-size: 27px;
  color: #000;
}
.title-bar {
  display: grid;
  grid-template-columns: 1fr auto 1fr;
  align-items: center;
  height: 57px;
  padding: 0 20px 0 16px;
  background: #f1f1f1;
  border-bottom: 1px solid #999;
}
.lights {
  display: flex;
  gap: 16px;
}
.lights button {
  width: 24px;
  height: 24px;
  border-radius: 50%;
}
.close {
  background: #ed6a5f;
}
.minimize {
  background: #f5bf4f;
}
.expand {
  background: #61c554;
}
h1 {
  display: flex;
  align-items: center;
  gap: 6px;
  margin: 0;
  font-size: 27px;
  line-height: 34px;
  color: #454545;
}
.menu-bar {
  display: flex;
  gap: 43px;
  padding: 28px 30px 0;
  line-height: 40px;
}
.tools {
  display: flex;
  align-items: center;
  padding-left: 8px;
  border-bottom: 2px solid #b0b0b0;
}
.grip {
  width: 11px;
  align-self: stretch;
  margin: 6px 0;
  border: solid #f8f8f8;
  border-width: 0 4px;
  border-style: double;
  flex: none;
}
.group {
  display: flex;
  align-items: center;
}
.main-tools {
  height: 83px;
  padding-top: 8px;
  font-family: 'Liberation Sans', sans-serif;
}
.main-tools .grip {
  margin-top: 0;
}
.main-tools .group button {
  width: 66px;
  height: 66px;
}
.main-tools .group {
  margin: 0 15px 0 17px;
}
.main-tools .grip + .group {
  margin-left: 2px;
}
.mode-tools {
  height: 68px;
  background: #d4d4d4;
  font-family: 'Liberation Serif', serif;
}
.mode-tools .group button {
  width: 54px;
  height: 54px;
}
.mode-tools .group {
  margin-right: 32px;
}
.mode-tools .grip + .group {
  margin-left: 2px;
}
.mode-tools svg {
  overflow: visible;
}
.focus-tools {
  height: 62px;
  padding-top: 3px;
  background: #e8e8e8;
  border-bottom: 4px solid #aaa;
}
.focus-tools .group {
  gap: 32px;
  margin: 0 36px;
}
.focus-tools .grip + .group {
  margin-left: 18px;
}
.small-icons {
  display: flex;
  gap: 14px;
  margin-left: -8px;
}
.small-icons.tight {
  gap: 18px;
  margin-left: -4px;
}
.help {
  width: 30px;
  font: 700 36px/34px 'Liberation Serif', serif;
  color: #888;
}
.doc-area {
  display: flex;
  height: 1240px;
  border-left: 2px solid #999;
}
.doc {
  flex: 1;
  padding: 194px 0 0 67px;
  background: #fff;
  font-family: 'Liberation Serif', serif;
  font-size: 52px;
  line-height: 52px;
}
.heading {
  margin: 0;
}
.equations {
  display: grid;
  grid-template-columns: 276px 102px auto;
  grid-template-rows: 130px 130px 102px 68px 68px;
  align-items: center;
  justify-content: start;
  margin-top: 134px;
}
.equations b {
  font-weight: 400;
}
.rel {
  text-align: center;
  padding-bottom: 2px;
}
.rhs {
  display: flex;
  align-items: center;
  height: 100%;
}
.frac {
  display: flex;
  flex-direction: column;
  align-self: center;
  margin: -20px 0;
}
.num,
.den {
  display: flex;
  justify-content: space-between;
  height: 64px;
  padding: 0 8px;
}
.num {
  align-items: flex-end;
  padding-bottom: 8px;
}
.num.high {
  padding-bottom: 16px;
}
.den {
  justify-content: center;
  gap: 6px;
  border-top: 3px solid #000;
  line-height: 48px;
}
.f1 {
  width: 276px;
}
.f2 {
  width: 391px;
}
.f3 {
  width: 757px;
}
.f4 {
  width: 195px;
}
.f3 .num,
.f4 .num {
  padding-left: 14px;
}
.f4 .num {
  padding-bottom: 4px;
}
.thin {
  margin-left: 8px;
}
.big {
  font-size: 60px;
}
.limits {
  display: flex;
  flex-direction: column;
  justify-content: space-between;
  height: 70px;
  margin-bottom: -10px;
  font-size: 36px;
  line-height: 32px;
}
.limits span {
  display: flex;
  gap: 3px;
}
.limits.int span {
  gap: 0;
  margin-left: -8px;
}
.limits small {
  font-size: 28px;
  line-height: 44px;
}
.sub {
  font-size: 36px;
  line-height: 30px;
  align-self: flex-end;
}
.inline {
  display: flex;
  gap: 6px;
  padding-bottom: 6px;
}
.red {
  color: #f00;
}
.blue {
  color: #00f;
}
.green {
  color: #008000;
}
.pink {
  color: #f0f;
}
.den.pink {
  border-color: #000;
}
.caret {
  margin: 79px 0 0 -5px;
}
.scroll {
  width: 34px;
  padding: 4px 4px 32px;
  border-left: 2px solid #a8a8a8;
  background: #e2e2e2;
}
.thumb {
  height: 100%;
  border-radius: 10px;
  background: #b0b0b0;
}
.status {
  display: flex;
  justify-content: space-between;
  align-items: center;
  height: 56px;
  padding: 4px 42px 0 20px;
}
</style>
